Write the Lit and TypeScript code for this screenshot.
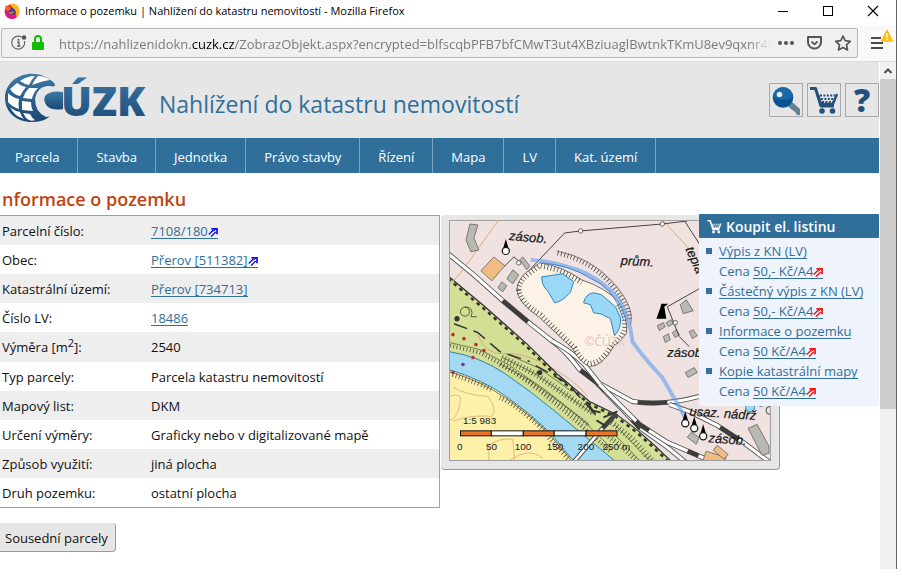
import { LitElement, html, css, svg, nothing } from "lit";
import { customElement, property } from "lit/decorators.js";

const arrow = html`<svg class="arrow" viewBox="0 0 10 10" width="10" height="10" aria-hidden="true">
  <path d="M0.800 7.500 L5.500 2.800 M3 9.700 L7.700 5" fill="none" stroke="currentColor" stroke-width="1.300" />
  <path d="M3.500 1.800 H9 V7.300" fill="none" stroke="currentColor" stroke-width="1.700" />
  <path d="M5.500 4.500 L8 2" fill="none" stroke="currentColor" stroke-width="1" />
</svg>`;

const cart = (size: number) => html`<svg viewBox="0 0 30 30" width=${size} height=${size} aria-hidden="true">
  <path d="M1 3.500 H6.500 L12 21 H25" fill="none" stroke="currentColor" stroke-width="3" stroke-linejoin="round" />
  <path d="M9 10 L12 19 H24 L28 9" fill="none" stroke="currentColor" stroke-width="2.400" />
  <path d="M11 10.500 H26 M12 14 H25 M13 17 H24" stroke="currentColor" stroke-width="2" stroke-dasharray="2 1.400" fill="none" />
  <circle cx="13" cy="26" r="2.800" fill="currentColor" />
  <circle cx="23.500" cy="26" r="2.800" fill="currentColor" />
</svg>`;

@customElement("browser-bar")
export class BrowserBar extends LitElement {
  static styles = css`
    :host { display: block; }
    .title { height: 25px; display: flex; align-items: center; background: #fff; color: #000; padding: 0 17px 4px 4px; box-sizing: border-box; gap: 5px; }
    .title svg { flex: none; }
    .name { flex: 1; line-height: 20px; white-space: nowrap; font-size: 11px; }
    .controls { display: flex; gap: 33px; }
    button { all: unset; display: flex; align-items: center; }
    .bar { height: 37px; box-sizing: border-box; background: #f9f9f9; border-bottom: 1px solid #dcdcdc; display: flex; align-items: center; padding: 0 2px 0 1px; }
    .url { flex: 1; min-width: 0; height: 30px; box-sizing: border-box; border: 1px solid #b6b6b6; border-radius: 2px; background: #f0f0f0; display: flex; align-items: center; padding: 0 5px 0 8px; }
    .address { flex: 1; min-width: 0; overflow: hidden; white-space: nowrap; font-size: 13px; line-height: 22px; color: #7b7b7b; margin-left: 11px; padding-top: 2px; -webkit-mask-image: linear-gradient(to right, #000 97%, transparent); mask-image: linear-gradient(to right, #000 97%, transparent); }
    .host { color: #000; }
    .actions { display: flex; gap: 11px; margin-left: 7px; }
    .menu { margin-left: 12px; }
  `;
  render() {
    return html`
      <div class="title">
        <svg viewBox="0 0 16 16" width="16" height="16" aria-hidden="true">
          <circle cx="8" cy="8.500" r="7.300" fill="#f5301c" />
          <path d="M8 16 C3 16 .6 12 .7 8 L4 6 C3 11 7 14 11 12.500 L14 12 C13 15 10 16 8 16Z" fill="#e31587" />
          <circle cx="8" cy="8" r="4" fill="#3b3bb3" />
          <path d="M6 1 C9 -.5 13 1 14.500 4 C16 8 15 12 12 14 C13 9 11 6 8.500 5 Z" fill="#ffb81c" />
          <path d="M1 5 L2 2 L4 4 L7 4.500 L6 7 L4 8Z" fill="#ff6a1a" />
          <path d="M4.500 8.500 C7 10 8 8 10 8.500 C9 12 5.500 12 4.500 8.500Z" fill="#ff6b16" />
        </svg>
        <span class="name">Informace o pozemku | Nahlížení do katastru nemovitostí - Mozilla Firefox</span>
        <div class="controls">
          <button aria-label="Minimalizovat"><svg width="12" height="12"><path d="M1 6.500 H11" stroke="#000" /></svg></button>
          <button aria-label="Maximalizovat"><svg width="12" height="12"><rect x="1.500" y="1.500" width="9" height="9" fill="none" stroke="#000" /></svg></button>
          <button aria-label="Zavřít"><svg width="12" height="12"><path d="M1 1 L11 11 M11 1 L1 11" stroke="#000" stroke-width="1.100" /></svg></button>
        </div>
      </div>
      <div class="bar">
        <div class="url">
          <svg width="18" height="18" viewBox="0 0 18 18" aria-hidden="true">
            <path d="M11.500 3 A6.500 6.500 0 1 0 14.500 7" fill="none" stroke="#666" stroke-width="1.200" />
            <circle cx="14" cy="3.500" r="2.300" fill="#555" /><circle cx="8.500" cy="5.800" r="1" fill="#555" />
            <path d="M7 8.200 H9 V12.200 M7 12.200 H10.500" stroke="#555" stroke-width="1.300" fill="none" />
          </svg>
          <svg width="20" height="18" viewBox="0 0 20 18" aria-hidden="true">
            <path d="M7 9 V5 A3 3 0 0 1 13 5 V9" fill="none" stroke="#12bc00" stroke-width="2" />
            <rect x="4" y="8" width="12" height="8" rx="1" fill="#12bc00" />
          </svg>
          <span class="address">https://nahlizenidokn.<span class="host">cuzk.cz</span>/ZobrazObjekt.aspx?encrypted=blfscqbPFB7bfCMwT3ut4XBziuaglBwtnkTKmU8ev9qxnr4l</span>
          <div class="actions">
            <button aria-label="Akce stránky"><svg width="18" height="18"><circle cx="3" cy="9" r="2" fill="#555" /><circle cx="9" cy="9" r="2" fill="#555" /><circle cx="15" cy="9" r="2" fill="#555" /></svg></button>
            <button aria-label="Pocket"><svg width="17" height="18"><path d="M2 3 H15 V8 A6.500 6.500 0 0 1 2 8 Z" fill="none" stroke="#555" stroke-width="2" stroke-linejoin="round" /><path d="M5.500 7.500 L8.500 10.300 L11.500 7.500" fill="none" stroke="#555" stroke-width="1.800" /></svg></button>
            <button aria-label="Záložka"><svg width="18" height="18"><path d="M9 2 L11.200 6.700 L16.300 7.300 L12.500 10.800 L13.500 15.900 L9 13.400 L4.500 15.900 L5.500 10.800 L1.700 7.300 L6.800 6.700 Z" fill="none" stroke="#555" stroke-width="1.700" stroke-linejoin="round" /></svg></button>
          </div>
        </div>
        <button class="menu" aria-label="Nabídka"><svg width="24" height="30" viewBox="0 0 24 30">
          <path d="M1 10 H11 M1 15 H13 M1 20 H13" stroke="#4a4a4a" stroke-width="2" />
          <path d="M17 2.500 L22.500 13 H11.500 Z" fill="#ffbf12" stroke="#ffbf12" stroke-width="1.500" stroke-linejoin="round" />
          <path d="M17 5.500 V9.500 M17 10.800 V12.300" stroke="#fff" stroke-width="1.500" />
        </svg></button>
      </div>`;
  }
}

@customElement("cadastre-map")
export class CadastreMap extends LitElement {
  static styles = css`
    :host { display: block; }
    svg { display: block; width: 100%; height: auto; }
    .label { font: italic 13px "Liberation Sans", Arial, sans-serif; fill: #151515; stroke: #151515; stroke-width: 0.2px; }
    .scale { font: 10px "Liberation Sans", Arial, sans-serif; fill: #222; }
    .mark { font: 12px "Noto Sans", sans-serif; fill: #efbfb8; }
  `;

  private rail(d: string, dash: string) {
    return svg`<path d=${d} fill="none" stroke="#555" stroke-width="5" />
      <path d=${d} fill="none" stroke="#fff" stroke-width="3.200" />
      <path d=${d} fill="none" stroke="#3d3d3d" stroke-width="4.400" stroke-dasharray=${dash} />`;
  }

  private hatch(d: string, width = 5, gap = "0.8 2.6") {
    return svg`<path d=${d} fill="none" stroke="#4d4d45" stroke-width=${width} stroke-dasharray=${gap} />`;
  }

  private house(points: string, fill = "#b9b9b4") {
    return svg`<polygon points=${points} fill=${fill} stroke="#66645c" stroke-width=".8" />`;
  }

  private tank(x: number, y: number) {
    return svg`<path d="M${x} ${y - 12} L${x + 3.5} ${y} H${x - 3.5} Z" fill="#000" />
      <circle cx=${x} cy=${y} r="3.600" fill="#fff" stroke="#111" stroke-width="1.200" />`;
  }

  render() {
    const bank = "M449 277 L484 306 L528 345 L557 374 L590 402 L617 415 L637 430 L655 446 L673 463";
    const teeth = "M448 279 L483 308 L527 347 L556 376 L589 404 L616 417 L636 432 L654 448 L672 465";
    return html`<svg viewBox="450 221 321 240" role="img" aria-label="Mapa okolí pozemku">
      <rect x="449" y="220" width="323" height="243" fill="#efe2e1" />
      <path d="${bank} L449 463 Z" fill="#d3df94" />
      <path d="M449 352 Q480 357 505 374 T553 410 T617 463 L449 463 Z" fill="#a3d9f3" />
      <path d="M449 370 Q482 380 505 396 T550 433 L575 463 H449 Z" fill="#fdf1a9" />
      <path d="M449 352 Q480 357 505 374 T553 410 T617 463 M449 370 Q482 380 505 396 T550 433 L575 463" fill="none" stroke="#3580a8" />
      ${this.hatch("M449 374 Q482 384 493 391", 5)}
      ${this.hatch("M500 398 Q512 403 530 418 T548 437 L570 461", 5)}
      <path d="M449 372 Q482 382 505 398 T549 434 L573 463" fill="none" stroke="#665b35" stroke-width=".8" />
      <path d="M450 343 L480 350 L510 366 L545 390 L580 418 L612 449" fill="none" stroke="#5d6a3b" stroke-width=".8" />
      ${this.hatch("M450 346 L480 353 L510 369 L542 393 L576 421 L612 453", 4)}
      ${this.hatch("M502 358 L535 374 L570 398 L594 414", 6)}
      ${this.hatch("M500 365 L530 382 L562 405 L588 425", 4)}
      ${this.hatch("M612 423 L633 440 L652 461", 6)}
      ${this.hatch("M604 433 L624 449 L638 462", 5)}
      <path d="M503 358 L535 374 L570 398 L596 416 M506 354 L540 369 L572 392 M500 364 L530 381 L562 404 L590 426 M615 425 L650 461 M610 430 L640 461" fill="none" stroke="#5a633d" stroke-width=".8" />
      <path d="M454 324 L478 333 L500 352 L530 362 M536 366 L568 384 L594 413" fill="none" stroke="#333" stroke-width="1.500" stroke-dasharray="14 7" />
      <path d="M478 336 Q487 356 504 354 T548 366 T588 397" fill="none" stroke="#dba27c" stroke-width=".9" />
      <path d="M453 388 Q468 396 488 397 Q498 410 492 417 Q470 415 453 422 M450 397 Q463 392 460 404 Q458 418 450 421 M489 461 V446 Q500 438 513 440 L515 463 M510 461 Q530 447 543 459" fill="none" stroke="#dfba79" stroke-width="1" />
      <circle cx="465" cy="312" r="4.500" fill="none" stroke="#525934" /><path d="M465 307 Q475 308 471 317 H477" fill="none" stroke="#525934" />
      <circle cx="457" cy="319" r="2.600" fill="#333" /><circle cx="540" cy="373" r="2.600" fill="#333" />
      ${[[453, 335], [464, 339], [476, 345], [484, 351], [463, 365], [453, 373], [473, 358]].map(([x, y], i) =>
        svg`<circle cx=${x} cy=${y} r="1.800" fill=${i === 4 ? "#8b2b8b" : "#c5273c"} />`)}
      <path d=${bank} fill="none" stroke="#333" stroke-width="1.200" />
      <path d=${teeth} fill="none" stroke="#333" stroke-width="2.600" stroke-dasharray="3.500 4" />

      <path d="M498 221 L463 270 L450 285 M664 221 L690 249" fill="none" stroke="#e0aa85" stroke-width="1" />
      <path d="M530 270 L565 233 L581 231 L663 224 L688 221 M686 222 L704 250 M504 267 L514 257 L520 262" fill="none" stroke="#444" stroke-width="1" />

      ${this.rail("M446 252 L475 276 L503 301 L528 322 L552 341 Q565 350 580 370 L597 383 L623 410 L640 428 L668 448 L690 466", "0 75 33 72 32 40 12 60 16 200")}
      ${this.rail("M552 341 Q572 352 584 364 L600 384 L633 402 Q663 407 700 397", "0 108 30 200")}
      ${this.rail("M670 405 L690 412 L718 426 L744 443 L772 464", "0 56 22 200")}
      ${this.rail("M600 385 L625 410 L640 425 L668 443 L705 459", "0 52 16 44 12 100")}
      <path d="M574 463 L603 429 L617 414" fill="none" stroke="#444" stroke-width="4.500" />
      <path d="M574 463 L603 429" fill="none" stroke="#fff" stroke-width="2.600" />
      <path d="M592 411 L601 413 M604 418 L618 412 M607 427 L597 421 M587 402 L596 415" stroke="#333" stroke-width="1.800" />

      <path d="M517 290 Q518 280 526 273 L540 263 Q562 266 582 280 Q606 288 619 302 Q629 320 627 334 Q622 340 614 347 Q603 367 590 367 Q580 363 573 349 L540 318 Q518 303 517 290 Z" fill="#fcf3e6" stroke="#625d58" stroke-width=".9" />
      ${this.hatch("M519 290 Q520 281 528 275 L540 266 Q562 269 582 283", 5)}
      ${this.hatch("M519 290 Q520 302 541 315 L575 348 Q582 362 590 364 Q602 363 612 346 Q626 336 625 325 Q625 310 617 303", 5)}
      ${this.hatch("M558 253 Q592 261 612 285 T629 320", 5)}
      <path d="M557 251 Q592 258 614 283 T631 325" fill="none" stroke="#625d58" stroke-width=".8" />
      <path d="M531 260 Q552 261 578 270 Q604 280 620 301 Q631 320 633 342 Q645 359 663 378 L687 420" fill="none" stroke="#5f9ff0" stroke-opacity=".6" stroke-width="4" stroke-linejoin="round" />
      <path d="M541 263 Q570 265 590 278 Q616 288 624 320" fill="none" stroke="#4388ce" stroke-width="1" />
      <path d="M542 277 L563 274 L574 282 L571 292 Q563 302 555 303 L548 291 Q542 286 542 277Z M584 303 Q586 294 594 293 L602 295 Q610 302 616 307 L621 318 Q622 329 615 336 L611 319 Q602 313 594 313 L591 305Z" fill="#9bd8f7" stroke="#3284bd" stroke-width="1" />

      ${this.house("470,224 478,225 474,238 479,250 471,252 466,240")}
      ${this.house("494,257 505,266 492,281 481,271", "#efbd84")}
      ${this.house("513,270 519,275 513,284 507,279")}
      ${this.house("502,282 507,286 503,292 498,288")}
      ${this.house("520,260 523,257 530,266 527,270")}
      ${this.house("687,300 694,311 684,314 681,305")}
      ${this.house("658,326 664,323 666,327 660,331")}
      ${this.house("667,323 672,320 674,324 669,327")}
      ${this.house("664,337 669,334 671,340 666,343")}
      ${this.house("673,333 677,330 680,335 676,338")}
      ${this.house("686,373 695,368 698,373 689,378")}
      ${this.house("690,332 694,330 698,336 693,339")}
      ${this.house("688,438 692,433 700,438 697,445")}
      ${this.house("707,452 727,458 725,463 703,463", "#efbd84")}
      ${this.house("718,446 729,455 725,460 714,451", "#efbd84")}
      ${this.house("749,429 758,425 770,447 770,454 763,456")}
      <path d="M668 307 L680 337 L690 347 M668 307 L700 289" fill="none" stroke="#444" />
      <path d="M662 304 H669 L665 307 L667 319 H657 L661 308 Z" fill="#000" />
      ${[[519, 263], [581, 231], [663, 224], [676, 323]].map(([x, y]) =>
        svg`<circle cx=${x} cy=${y} r="2.200" fill="#fff" stroke="#444" stroke-width=".8" />`)}
      <circle cx="751" cy="408" r="4.500" fill="#9bd8f7" stroke="#3284bd" /><circle cx="762" cy="403" r="4" fill="#9bd8f7" stroke="#3284bd" />
      <circle cx="771" cy="411" r="4" fill="none" stroke="#444" />
      ${this.tank(506, 251)}${this.tank(686, 424)}${this.tank(695, 429)}${this.tank(704, 437)}

      <text class="label" transform="translate(509 240) rotate(5)">zásob.</text>
      <text class="label" transform="translate(621 265) rotate(3)">prům.</text>
      <text class="label" transform="translate(686 249) rotate(66)">teplá</text>
      <text class="label" x="668" y="357">zásob.</text>
      <text class="label" x="713" y="407">zásob.</text>
      <text class="label" transform="translate(690 416) rotate(4)">usaz. nádrž</text>
      <text class="label" transform="translate(709 443) rotate(4)">zásob.</text>
      <text class="mark" x="585" y="346">©ČÚZK</text>
      <text class="scale" x="463" y="425">1:5 983</text>
      ${[460, 491, 523, 554, 586].map((x, i) =>
        svg`<rect x=${x + 0.5} y="431.500" width=${i === 1 || i === 3 ? 32 : 31} height="5" fill=${i % 2 ? "#fff" : "#e87528"} stroke="#111" />`)}
      ${[["0", 457], ["50", 486], ["100", 515], ["150", 547], ["200", 578], ["250 m", 603]].map(([t, x]) =>
        svg`<text class="scale" x=${x} y="451">${t}</text>`)}
    </svg>`;
  }
}

interface Doc { name: string; price: string }

@customElement("buy-panel")
export class BuyPanel extends LitElement {
  @property({ attribute: false }) docs: Doc[] = [];
  static styles = css`
    :host { display: block; background: #eff4fc; color: #2f6f9a; font-size: 13px; }
    h2 { margin: 0; height: 24px; display: flex; align-items: center; gap: 4px; padding: 0 8px; background: #2f6f9a; color: #fff; font-size: 14px; font-weight: 600; border-radius: 1px; }
    ul { list-style: none; margin: 0; padding: 3px 0 5px 7px; }
    li { display: grid; grid-template-columns: 6px 1fr; column-gap: 7px; line-height: 20px; white-space: nowrap; }
    li::before { content: ""; width: 6px; height: 6px; margin-top: 7px; background: #2f6f9a; }
    a { display: inline-block; line-height: 14px; color: inherit; text-decoration: none; border-bottom: 1px solid; }
    .arrow { color: #f20d0d; vertical-align: -1px; }
  `;
  render() {
    return html`<h2>${cart(15)}Koupit el. listinu</h2>
      <ul>${this.docs.map((d) => html`<li><div><a href="#">${d.name}</a><br />Cena <a href="#">${d.price}${arrow}</a></div></li>`)}</ul>`;
  }
}

@customElement("app-root")
export class AppRoot extends LitElement {
  static styles = css`
    :host { display: block; background: #fff; font-family: "Open Sans", "Noto Sans", sans-serif; font-size: 13px; color: #111; }
    .window { margin-right: 5px; border-right: 1px solid #666; min-height: calc(100vh - 11px); display: flex; flex-direction: column; }
    .view { flex: 1; display: flex; }
    main { flex: 1; min-width: 0; position: relative; border-right: 1px solid #fff; }
    header { height: 76px; box-sizing: border-box; background: #e6e6e6; display: flex; align-items: center; padding: 0 0 0 4px; gap: 11px; color: #2f6f9a; }
    .brand { font-size: 23px; line-height: 32px; padding-top: 8px; flex: 1; white-space: nowrap; }
    .logo { flex: none; }
    .logo text { font: 800 41px "Open Sans", sans-serif; }
    .tools { display: flex; gap: 4px; }
    .tools button { width: 34px; height: 34px; margin: 0; padding: 0; display: grid; place-items: center; border: 1px solid #a8a8a8; background: #e6e6e6; color: #24507d; font: 800 32px/30px "Open Sans", sans-serif; }
    nav { display: flex; height: 35px; background: #2f6f9a; }
    nav a { box-sizing: border-box; color: #fff; text-decoration: none; line-height: 34px; padding: 2px 18px 0; height: 35px; border-right: 1px solid #7ba5c1; white-space: nowrap; }
    nav a:first-child { padding-left: 15px; }
    h1 { margin: 0; padding: 13px 2px 3px; font-size: 18px; line-height: 26px; font-weight: 600; color: #c1440e; }
    .content { display: flex; align-items: flex-start; gap: 1px; }
    table { width: 50%; border-collapse: separate; border-spacing: 0; border: 1px solid #a0a0a0; border-left: 0; line-height: 20px; }
    th, td { height: 29px; padding: 0 0 0 2px; box-sizing: border-box; text-align: left; font-weight: 400; }
    th { width: 149px; }
    .tall th { height: 30px; }
    tr:nth-child(odd) { background: #eee; }
    sup { font-size: 11px; line-height: 0; }
    td a { display: inline-block; line-height: 14px; color: #2f6f9a; text-decoration: none; border-bottom: 1px solid; }
    .arrow { color: #0b0be8; vertical-align: -1px; }
    .map { flex: 0 1 322px; padding: 5px 8px 8px; background: #e6e6e6; border-right: 1px solid #999; border-bottom: 1px solid #999; border-radius: 4px; }
    cadastre-map { border: 1px solid #a0a0a0; }
    buy-panel { position: absolute; top: 152px; right: 0; width: 180px; }
    .neighbours { margin: 15px 0 0; padding: 2px 7px 0 5px; height: 29px; border: 1px solid #999; border-width: 0 1px 1px 0; border-radius: 0 4px 4px 0; background: #e6e6e6; font: 13px "Open Sans", sans-serif; color: #111; }
    .scroll { width: 16px; background: #f0f0f0; display: flex; flex-direction: column; align-items: center; }
    .up { border: 0; padding: 0; background: none; height: 17px; width: 16px; display: grid; place-items: center; }
    .thumb { width: 100%; flex: 0 0 65%; background: #cdcdcd; }
  `;

  private nav = ["Parcela", "Stavba", "Jednotka", "Právo stavby", "Řízení", "Mapa", "LV", "Kat. území"];
  private rows: { label: unknown; value: string; link?: boolean; ext?: boolean; tall?: boolean }[] = [
    { label: "Parcelní číslo:", value: "7108/180", link: true, ext: true },
    { label: "Obec:", value: "Přerov [511382]", link: true, ext: true },
    { label: "Katastrální území:", value: "Přerov [734713]", link: true },
    { label: "Číslo LV:", value: "18486", link: true },
    { label: html`Výměra [m<sup>2</sup>]:`, value: "2540", tall: true },
    { label: "Typ parcely:", value: "Parcela katastru nemovitostí" },
    { label: "Mapový list:", value: "DKM" },
    { label: "Určení výměry:", value: "Graficky nebo v digitalizované mapě" },
    { label: "Způsob využití:", value: "jiná plocha" },
    { label: "Druh pozemku:", value: "ostatní plocha" },
  ];
  private docs: Doc[] = [
    { name: "Výpis z KN (LV)", price: "50,- Kč/A4" },
    { name: "Částečný výpis z KN (LV)", price: "50,- Kč/A4" },
    { name: "Informace o pozemku", price: "50 Kč/A4" },
    { name: "Kopie katastrální mapy", price: "50 Kč/A4" },
  ];

  render() {
    return html`<div class="window">
      <browser-bar></browser-bar>
      <div class="view">
        <main>
          <header>
            <svg class="logo" viewBox="0 0 144 56" width="144" height="56" role="img" aria-label="ČÚZK">
              <defs><linearGradient id="g" x1="0" y1="0" x2="0" y2="1"><stop offset="0" stop-color="#3c7aa8" /><stop offset="1" stop-color="#1c4674" /></linearGradient></defs>
              <path d="M51 12 C44 4 33 1 24 2 C10 4 1 14 1 26 C1 40 12 50 28 50 C38 50 44 47 48 42 C39 44 32 36 32 27 C32 17 41 11 50 16 Z" fill="url(#g)" />
              <path d="M6 17 L13 11 Q17 14 22 15 Q18 20 16 24 Q10 23 6 17Z M16 9 Q23 4 31 4 Q27 8 25 13 Q20 12 16 9Z M34 4 Q41 4 46 8 Q38 9 28 13 Q30 8 34 4Z M4 21 Q9 26 15 27 Q14 32 15 37 Q8 35 4 30Z M19 26 Q21 20 25 16 L34 16 Q29 21 28 27Z M18 29 L27 30 Q27 35 29 39 L18 38Z M6 35 Q10 39 16 40 Q17 44 20 47 Q10 44 6 35Z M19 41 L26 42 Q28 46 31 48 Q26 50 22 46Z" fill="#fff" />
              <path d="M31 27 Q33 15 45 14 L55 15 V20 Q41 17 40 28 Q40 40 54 42 Q48 45 42 45 Q31 40 31 27Z" fill="#e6e6e6" />
              <path d="M41 24 Q46 18 59 20 V37 Q48 39 43 34 Q39 29 41 24Z" fill="url(#g)" />
              <text x="57" y="44" fill="url(#g)">ÚZK</text>
            </svg>
            <span class="brand">Nahlížení do katastru nemovitostí</span>
            <div class="tools">
              <button aria-label="Přihlášení"><svg width="30" height="30" viewBox="0 0 30 30">
                <path d="M16 20 L20 16 L29 24 V30 H26 L24 27 L20 24Z" fill="#68818f" /><circle cx="12" cy="12.500" r="10.300" fill="#0c5290" />
                <path d="M2 12 A10 10 0 0 1 22 12 Q12 18 2 12Z" fill="#1769a7" /><circle cx="8.500" cy="9.500" r="2.800" fill="#dcebf5" /></svg></button>
              <button aria-label="Košík">${cart(30)}</button>
              <button aria-label="Nápověda">?</button>
            </div>
          </header>
          <nav>${this.nav.map((n) => html`<a href="#">${n}</a>`)}</nav>
          <h1>nformace o pozemku</h1>
          <div class="content">
            <table><tbody>${this.rows.map((r) => html`<tr class=${r.tall ? "tall" : nothing}><th scope="row">${r.label}</th>
              <td>${r.link ? html`<a href="#">${r.value}${r.ext ? arrow : nothing}</a>` : r.value}</td></tr>`)}</tbody></table>
            <div class="map"><cadastre-map></cadastre-map></div>
          </div>
          <button class="neighbours">Sousední parcely</button>
          <buy-panel .docs=${this.docs}></buy-panel>
        </main>
        <div class="scroll">
          <button class="up" aria-label="Nahoru"><svg width="10" height="8"><path d="M1.500 6 L5 2.500 L8.500 6" fill="none" stroke="#505050" stroke-width="2" /></svg></button>
          <div class="thumb"></div>
        </div>
      </div>
    </div>`;
  }
}
